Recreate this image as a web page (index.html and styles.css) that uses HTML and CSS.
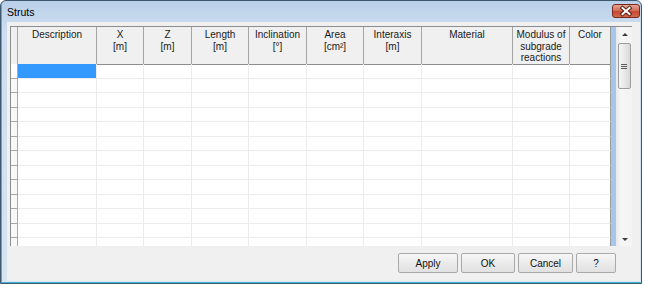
FILE: index.html
```html
<!DOCTYPE html>
<html lang="en">

<head>
    <meta charset="UTF-8">
    <title>Struts</title>
    <link rel="stylesheet" href="styles.css">
</head>

<body>
    <div class="window">
        <div class="titlebar">
            <span class="title">Struts</span>
            <div class="close">
                <svg width="28" height="14" viewBox="0 0 28 14">
                    <path d="M10.5 4 L17.5 10 M17.5 4 L10.5 10" stroke="#5a1e14" stroke-width="4" stroke-linecap="square" />
                    <path d="M10.5 4 L17.5 10 M17.5 4 L10.5 10" stroke="#fff" stroke-width="2" stroke-linecap="square" />
                </svg>
            </div>
        </div>

        <div class="client">
            <div class="grid">
                <div class="sheet">
                    <div class="row head">
                        <div class="rh"></div>
                        <div class="hc">Description</div>
                        <div class="hc">X<br>[m]</div>
                        <div class="hc">Z<br>[m]</div>
                        <div class="hc">Length<br>[m]</div>
                        <div class="hc">Inclination<br>[°]</div>
                        <div class="hc">Area<br>[cm²]</div>
                        <div class="hc">Interaxis<br>[m]</div>
                        <div class="hc">Material</div>
                        <div class="hc">Modulus of<br>subgrade<br>reactions</div>
                        <div class="hc">Color</div>
                    </div>
                    <div class="row"><div class="rh first"></div><div class="c sel"></div><div class="c"></div><div class="c"></div><div class="c"></div><div class="c"></div><div class="c"></div><div class="c"></div><div class="c"></div><div class="c"></div><div class="c"></div></div>
                    <div class="row"><div class="rh"></div><div class="c"></div><div class="c"></div><div class="c"></div><div class="c"></div><div class="c"></div><div class="c"></div><div class="c"></div><div class="c"></div><div class="c"></div><div class="c"></div></div>
                    <div class="row"><div class="rh"></div><div class="c"></div><div class="c"></div><div class="c"></div><div class="c"></div><div class="c"></div><div class="c"></div><div class="c"></div><div class="c"></div><div class="c"></div><div class="c"></div></div>
                    <div class="row"><div class="rh"></div><div class="c"></div><div class="c"></div><div class="c"></div><div class="c"></div><div class="c"></div><div class="c"></div><div class="c"></div><div class="c"></div><div class="c"></div><div class="c"></div></div>
                    <div class="row"><div class="rh"></div><div class="c"></div><div class="c"></div><div class="c"></div><div class="c"></div><div class="c"></div><div class="c"></div><div class="c"></div><div class="c"></div><div class="c"></div><div class="c"></div></div>
                    <div class="row"><div class="rh"></div><div class="c"></div><div class="c"></div><div class="c"></div><div class="c"></div><div class="c"></div><div class="c"></div><div class="c"></div><div class="c"></div><div class="c"></div><div class="c"></div></div>
                    <div class="row"><div class="rh"></div><div class="c"></div><div class="c"></div><div class="c"></div><div class="c"></div><div class="c"></div><div class="c"></div><div class="c"></div><div class="c"></div><div class="c"></div><div class="c"></div></div>
                    <div class="row"><div class="rh"></div><div class="c"></div><div class="c"></div><div class="c"></div><div class="c"></div><div class="c"></div><div class="c"></div><div class="c"></div><div class="c"></div><div class="c"></div><div class="c"></div></div>
                    <div class="row"><div class="rh"></div><div class="c"></div><div class="c"></div><div class="c"></div><div class="c"></div><div class="c"></div><div class="c"></div><div class="c"></div><div class="c"></div><div class="c"></div><div class="c"></div></div>
                    <div class="row"><div class="rh"></div><div class="c"></div><div class="c"></div><div class="c"></div><div class="c"></div><div class="c"></div><div class="c"></div><div class="c"></div><div class="c"></div><div class="c"></div><div class="c"></div></div>
                    <div class="row"><div class="rh"></div><div class="c"></div><div class="c"></div><div class="c"></div><div class="c"></div><div class="c"></div><div class="c"></div><div class="c"></div><div class="c"></div><div class="c"></div><div class="c"></div></div>
                    <div class="row"><div class="rh"></div><div class="c"></div><div class="c"></div><div class="c"></div><div class="c"></div><div class="c"></div><div class="c"></div><div class="c"></div><div class="c"></div><div class="c"></div><div class="c"></div></div>
                    <div class="row"><div class="rh"></div><div class="c"></div><div class="c"></div><div class="c"></div><div class="c"></div><div class="c"></div><div class="c"></div><div class="c"></div><div class="c"></div><div class="c"></div><div class="c"></div></div>
                </div>
                <div class="strip"></div>
                <div class="vscroll">
                    <div class="arrow up"></div>
                    <div class="track">
                        <div class="thumb"><span class="grip"></span></div>
                    </div>
                    <div class="arrow down"></div>
                </div>
            </div>

            <div class="buttons">
                <div class="btn apply">Apply</div>
                <div class="btn ok">OK</div>
                <div class="btn cancel">Cancel</div>
                <div class="btn help">?</div>
            </div>
        </div>
    </div>
</body>

</html>
```

FILE: styles.css
```css
body {
    margin: 0;
    background-color: #fff;
    font-family: "Liberation Sans", Arial, sans-serif;
    font-size: 10px;
    color: #111;
}

.window {
    width: 640px;
    height: 282px;
    border: 1px solid #3e5870;
    border-radius: 6px 6px 0 0;
    background: linear-gradient(to bottom, #bad0e9, #cddef0 30px, #d6e4f2);
    box-shadow: inset 1px -1px 0 #45b3d6;
    display: flex;
    flex-direction: column;
}

.titlebar {
    height: 21px;
    display: flex;
    justify-content: space-between;
    align-items: flex-start;
    padding-left: 6px;
}

.title {
    font-size: 10.5px;
    line-height: 22px;
    color: #000;
}

.close {
    width: 26px;
    height: 12px;
    margin-top: 3px;
    margin-right: 1px;
    border: 1px solid #7a2a1d;
    border-radius: 3px;
    background: linear-gradient(to bottom, #e6a493, #d2715c 45%, #c44a30 55%, #d4694d);
    display: flex;
}

.close svg {
    margin: -1px;
}

.client {
    flex: 1;
    margin: 0 1px 2px 6px;
    background-color: #f0f0f0;
    padding: 4px 0 0 3px;
    display: flex;
    flex-direction: column;
}

.grid {
    width: 622px;
    height: 219px;
    border-top: 1px solid #8d8d8d;
    display: flex;
    overflow: hidden;
}

.sheet {
    width: 600px;
    border-left: 1px solid #8d8d8d;
    background-color: #fff;
}

.row {
    display: grid;
    grid-template-columns: 7px 79px 47px 48px 57px 58px 57px 58px 91px 57px 41px;
    height: 14.5px;
}

.row.head {
    height: 37px;
}

.rh {
    border-right: 1px solid #a8a8a8;
    border-bottom: 1px solid #a8a8a8;
    background-color: #f8f8f8;
}

.rh.first {
    background-color: #fdfdfd;
}

.head .rh {
    background-color: #f0f0f0;
    border-bottom-color: #8d8d8d;
}

.hc {
    border-right: 1px solid #a5a5a5;
    border-bottom: 1px solid #8d8d8d;
    background-color: #f0f0f0;
    text-align: center;
    padding-top: 2px;
    line-height: 11.5px;
    color: #1a1a1a;
}

.c {
    border-right: 1px solid #ececec;
    border-bottom: 1px solid #ececec;
}

.row > :last-child {
    border-right-color: #9a9a9a;
}

.c.sel {
    background-color: #3399ff;
}

.strip {
    width: 5px;
    background-color: #a6c6ee;
}

.vscroll {
    width: 17px;
    display: flex;
    flex-direction: column;
    background: linear-gradient(to right, #e9e9e9, #f6f6f6 30%, #f3f3f3);
}

.arrow {
    height: 16px;
    position: relative;
}

.arrow::after {
    content: "";
    position: absolute;
    left: 6px;
    border-left: 3px solid transparent;
    border-right: 3px solid transparent;
}

.arrow.up::after {
    top: 6px;
    border-bottom: 3px solid #3a3a3a;
}

.arrow.down::after {
    top: 8px;
    border-top: 3px solid #3a3a3a;
}

.track {
    flex: 1;
}

.thumb {
    width: 13px;
    height: 46px;
    margin-left: 2px;
    border: 1px solid #9c9c9c;
    border-radius: 2px;
    box-sizing: border-box;
    background: linear-gradient(to right, #f6f6f6, #e8e8e8 50%, #d8d8d8);
    display: flex;
    align-items: center;
    justify-content: center;
}

.grip {
    width: 6px;
    height: 5px;
    background: repeating-linear-gradient(to bottom, #5c5c5c 0, #5c5c5c 1px, transparent 1px, transparent 2px);
}

.buttons {
    display: flex;
    justify-content: flex-end;
    gap: 3px;
    margin-top: 7px;
    padding-right: 24px;
}

.btn {
    height: 18px;
    border: 1px solid #a9a9a9;
    border-radius: 2px;
    background: linear-gradient(to bottom, #f7f7f7, #ebebeb 50%, #e1e1e1);
    display: flex;
    align-items: center;
    justify-content: center;
    color: #111;
}

.apply {
    width: 58px;
}

.ok {
    width: 52px;
}

.cancel {
    width: 53px;
}

.help {
    width: 38px;
}
```
